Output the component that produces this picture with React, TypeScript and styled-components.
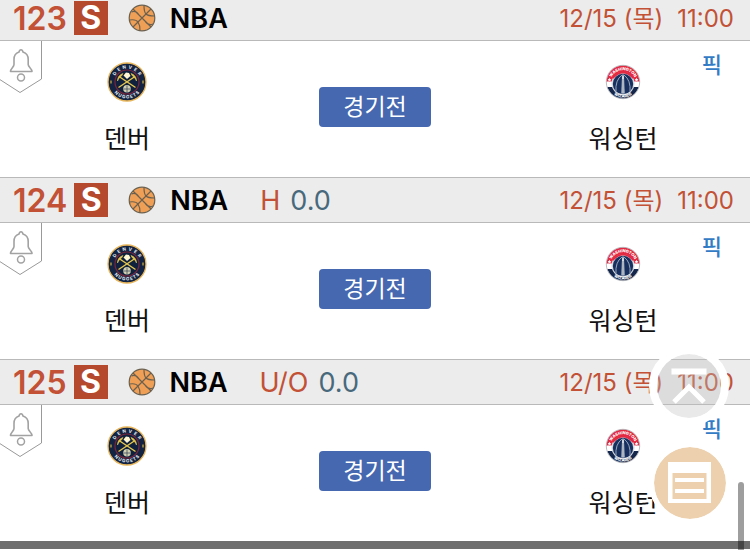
import React from "react";
import styled, { createGlobalStyle } from "styled-components";

const GlobalStyle = createGlobalStyle`
  * { box-sizing: border-box; }
  html, body { margin: 0; background: #fff; overflow: hidden; }
  body, button { font-family: Inter, "Noto Sans CJK KR", sans-serif; }
`;

const Page = styled.main`
  width: 100%;
  overflow: hidden;
`;

const List = styled.div`
  margin-top: -5px;
`;

const Header = styled.header`
  display: flex;
  align-items: center;
  height: 46px;
  padding: 0 16px 0 13px;
  background: #ececec;
  border: 1px solid #b9b9b9;
  border-width: 1px 0;
  white-space: nowrap;
`;

const Num = styled.span`
  padding-top: 2px;
  font-size: 32px;
  line-height: 32px;
  font-weight: 600;
  color: #c25136;
`;

const Badge = styled.span`
  width: 34px;
  height: 34px;
  margin-left: 7px;
  text-align: center;
  font-size: 32px;
  line-height: 34px;
  font-weight: 700;
  color: #fff;
  background: #b5492e;
`;

const Ball = styled.svg`
  width: 28px;
  height: 28px;
  margin: 0 14px 0 20px;
`;

const League = styled.h2`
  margin: 0 32px 0 0;
  padding-top: 2px;
  font-size: 27px;
  line-height: 32px;
  font-weight: 600;
  color: #000;
`;

const Market = styled.span`
  margin-right: 10px;
  padding-top: 2px;
  font-size: 27px;
  line-height: 32px;
  color: #c25136;
`;

const Line = styled.span`
  padding-top: 2px;
  font-size: 27px;
  line-height: 32px;
  color: #48697c;
`;

const When = styled.time`
  display: flex;
  gap: 14px;
  margin-left: auto;
  padding-top: 2px;
  font-size: 24px;
  line-height: 32px;
  color: #c25136;
`;

const Body = styled.div`
  position: relative;
  display: grid;
  grid-template-columns: repeat(3, 1fr);
  align-items: center;
  justify-items: center;
  height: 136px;
  padding: 0 3px 4px;
  background: #fff;
`;

const Alarm = styled.button`
  position: absolute;
  top: 0;
  left: 0;
  padding: 0;
  border: 0;
  background: none;
  svg { display: block; }
`;

const Team = styled.div`
  display: flex;
  flex-direction: column;
  align-items: center;
  gap: 19px;
  padding-top: 5px;
  svg { display: block; }
`;

const TeamName = styled.span`
  font-size: 25px;
  line-height: 36px;
  color: #111;
`;

const Status = styled.button`
  width: 112px;
  height: 40px;
  padding: 0;
  border: 0;
  border-radius: 4px;
  background: #4668b0;
  color: #fff;
  font-size: 23px;
  line-height: 40px;
`;

const Pick = styled.a`
  position: absolute;
  top: 8px;
  right: 28px;
  font-size: 22px;
  line-height: 32px;
  font-weight: 500;
  color: #347bc6;
  text-decoration: none;
`;

const BottomBar = styled.div`
  height: 8px;
  background: #6e6e6e;
`;

const Floating = styled.div`
  position: fixed;
  right: 19px;
  bottom: 26px;
  display: flex;
  flex-direction: column;
  align-items: flex-start;
  gap: 16px;
`;

const Round = styled.button<{ $bg: string; $ring: number; $size: number }>`
  display: flex;
  align-items: center;
  justify-content: center;
  width: ${(p) => p.$size}px;
  height: ${(p) => p.$size}px;
  padding: 0;
  border: ${(p) => p.$ring}px solid #fff;
  border-radius: 50%;
  background: ${(p) => p.$bg};
  background-clip: padding-box;
`;

const Scrollbar = styled.div`
  position: fixed;
  right: 6px;
  bottom: 0;
  width: 6px;
  height: 68px;
  border-radius: 3px 3px 0 0;
  background: rgba(0, 0, 0, 0.38);
`;

const Basketball = () => (
  <Ball viewBox="0 0 28 28" fill="none" stroke="#6b604f" strokeWidth="1.2" aria-hidden="true">
    <circle cx="14" cy="14" r="12.8" fill="#f0a056" />
    <path d="M5 5 23 23M23 5 5 23M1.500 16Q8 15 10 18T12 26.500M16 1.500Q16 8 18 10T26.500 12M3.500 8Q8 6 11 11M25 20Q20 22 17 17" />
  </Ball>
);

const BellFlag = () => (
  <svg width="42" height="53" viewBox="0 0 42 53" fill="none" aria-hidden="true">
    <path d="M41.500 0V38L20 51.500L-1 38" stroke="#999" />
    <path
      d="M21 8.700C19.800 8.700 19.200 10 19 11C15.700 12 14 14.700 14 18.500V23.500C14 26 10.500 27.500 10.500 30.500H32C32 27.500 28.200 26 28.200 23.500V18.500C28.200 14.700 26.400 12 23 11C22.800 10 22.200 8.700 21 8.700Z"
      stroke="#a2a2a2" strokeWidth="1.600" strokeLinejoin="round"
    />
    <circle cx="21" cy="36.500" r="3.500" stroke="#a2a2a2" strokeWidth="1.500" />
  </svg>
);

const Denver = ({ id }: { id: string }) => (
  <svg width="40" height="40" viewBox="0 0 40 40" role="img" aria-label="Denver Nuggets">
    <defs>
      <path id={`dt${id}`} d="M6.500 20A13.500 13.500 0 0 1 33.500 20" />
      <path id={`db${id}`} d="M3.500 20A16.500 16.500 0 0 0 36.500 20" />
    </defs>
    <circle cx="20" cy="20" r="19" fill="#132342" stroke="#e7b55a" strokeWidth="1.300" />
    <circle cx="20" cy="20" r="12" fill="#10213e" stroke="#79263d" strokeWidth="1.200" />
    <g fill="#e9edf2" fontFamily="Inter, sans-serif" fontSize="4.500" fontWeight="700" textAnchor="middle">
      <text><textPath href={`#dt${id}`} startOffset="50%">{"D\u00a0\u00a0E\u00a0\u00a0N\u00a0\u00a0V\u00a0\u00a0E\u00a0\u00a0R"}</textPath></text>
      <text><textPath href={`#db${id}`} startOffset="50%">{"N\u00a0U\u00a0G\u00a0G\u00a0E\u00a0T\u00a0S"}</textPath></text>
    </g>
    <path d="M4 18.500v3M36 18.500v3" stroke="#d4b645" strokeWidth="1.200" />
    <path d="M12 14.500 28.500 25.500M28 14.500 11.500 25.500" stroke="#e5c64c" strokeWidth="1.500" />
    <path d="M10.500 19C10.500 15.500 12.500 12.500 16 11.500L14.500 14C12.500 15 11.500 17 10.500 19ZM29.500 19C29.500 15.500 27.500 12.500 24 11.500L25.500 14C27.500 15 28.500 17 29.500 19Z" fill="#e5c64c" stroke="#e5c64c" strokeWidth=".6" />
    <path d="M16.500 13.500 19 10.500 22 11 23.500 14 20 17Z" fill="#fff7d2" />
    <circle cx="20" cy="26.800" r="3.800" fill="#d0d0b0" />
    <path d="M20 23.500v7M16.500 27h7" stroke="#33405a" strokeWidth=".7" fill="none" />
  </svg>
);

const Washington = ({ id }: { id: string }) => (
  <svg width="40" height="40" viewBox="0 0 40 40" role="img" aria-label="Washington Wizards">
    <defs>
      <path id={`wt${id}`} d="M7.200 21A12.800 12.800 0 0 1 32.800 21" />
      <path id={`wb${id}`} d="M4.500 20A15.500 15.500 0 0 0 35.500 20" />
      <clipPath id={`wc${id}`}><circle cx="20" cy="20" r="16.500" /></clipPath>
    </defs>
    <g clipPath={`url(#wc${id})`}>
      <path fill="#e32942" d="M0 0h40v20H0z" />
      <path fill="#fff" d="M0 19.500h40v6H0z" />
      <path fill="#14264c" d="M0 25h40v15H0z" />
    </g>
    <circle cx="20" cy="20" r="16.700" fill="none" stroke="#a8a9ae" strokeWidth=".8" />
    <circle cx="20" cy="21.500" r="11.500" fill="#d9dce1" />
    <path d="M9.500 16Q20 5 30.500 16" fill="none" stroke="#e32942" strokeWidth="2" />
    <circle cx="20" cy="22" r="10.200" fill="#173060" />
    <path d="M19 13Q12 18 13 30M21 13Q28 18 27 30" fill="none" stroke="#aab3c2" strokeWidth=".9" />
    <path d="m20 11.500 1 3 .6 17h-3.200l.6-17Z" fill="#d5d9df" />
    <path d="M20 17v14" stroke="#53627e" strokeWidth=".6" />
    <g fill="#fff" fontFamily="Inter, sans-serif" fontSize="4" fontWeight="800" textAnchor="middle">
      <text><textPath href={`#wt${id}`} startOffset="50%">WASHINGTON</textPath></text>
      <text><textPath href={`#wb${id}`} startOffset="50%">WIZARDS</textPath></text>
    </g>
    <path d="m6.500 15.800.6 1.200 1.300.2-1 .9.3 1.300-1.200-.6-1.200.6.3-1.300-1-.9 1.300-.2ZM33.500 15.800l.6 1.200 1.300.2-1 .9.3 1.300-1.200-.6-1.200.6.3-1.300-1-.9 1.300-.2Z" fill="#fff" />
  </svg>
);

type Game = { no: string; market?: string; line?: string };

const games: Game[] = [
  { no: "123" },
  { no: "124", market: "H", line: "0.0" },
  { no: "125", market: "U/O", line: "0.0" },
];

const GameRow = ({ no, market, line }: Game) => (
  <section>
    <Header>
      <Num>{no}</Num>
      <Badge>S</Badge>
      <Basketball />
      <League>NBA</League>
      {market && <Market>{market}</Market>}
      {line && <Line>{line}</Line>}
      <When>
        <span>12/15 (목)</span>
        <span>11:00</span>
      </When>
    </Header>
    <Body>
      <Alarm type="button" aria-label="알림"><BellFlag /></Alarm>
      <Team>
        <Denver id={no} />
        <TeamName>덴버</TeamName>
      </Team>
      <Status type="button">경기전</Status>
      <Team>
        <Washington id={no} />
        <TeamName>워싱턴</TeamName>
      </Team>
      <Pick href="#pick">픽</Pick>
    </Body>
  </section>
);

export default function App() {
  return (
    <Page>
      <GlobalStyle />
      <List>
        {games.map((g) => <GameRow key={g.no} {...g} />)}
      </List>
      <BottomBar />
      <Floating>
        <Round type="button" aria-label="맨 위로" $bg="rgba(192, 192, 192, 0.35)" $ring={8} $size={80}>
          <svg width="40" height="40" viewBox="0 0 40 40" fill="none" stroke="#fff" aria-hidden="true">
            <path d="M2.500 5.500H37.500" strokeWidth="6" />
            <path d="M5 36 20 21 35 36" strokeWidth="5" />
          </svg>
        </Round>
        <Round type="button" aria-label="목록" $bg="#edd1ae" $ring={5} $size={82}>
          <svg width="44" height="42" viewBox="0 0 44 42" fill="none" stroke="#fff" aria-hidden="true">
            <path d="M0 0H43V41H0ZM4.500 11V37H38.500V11Z" fill="#fff" fillRule="evenodd" stroke="none" />
            <path d="M7 18H36M7 29H36" strokeWidth="4" />
          </svg>
        </Round>
      </Floating>
      <Scrollbar />
    </Page>
  );
}
